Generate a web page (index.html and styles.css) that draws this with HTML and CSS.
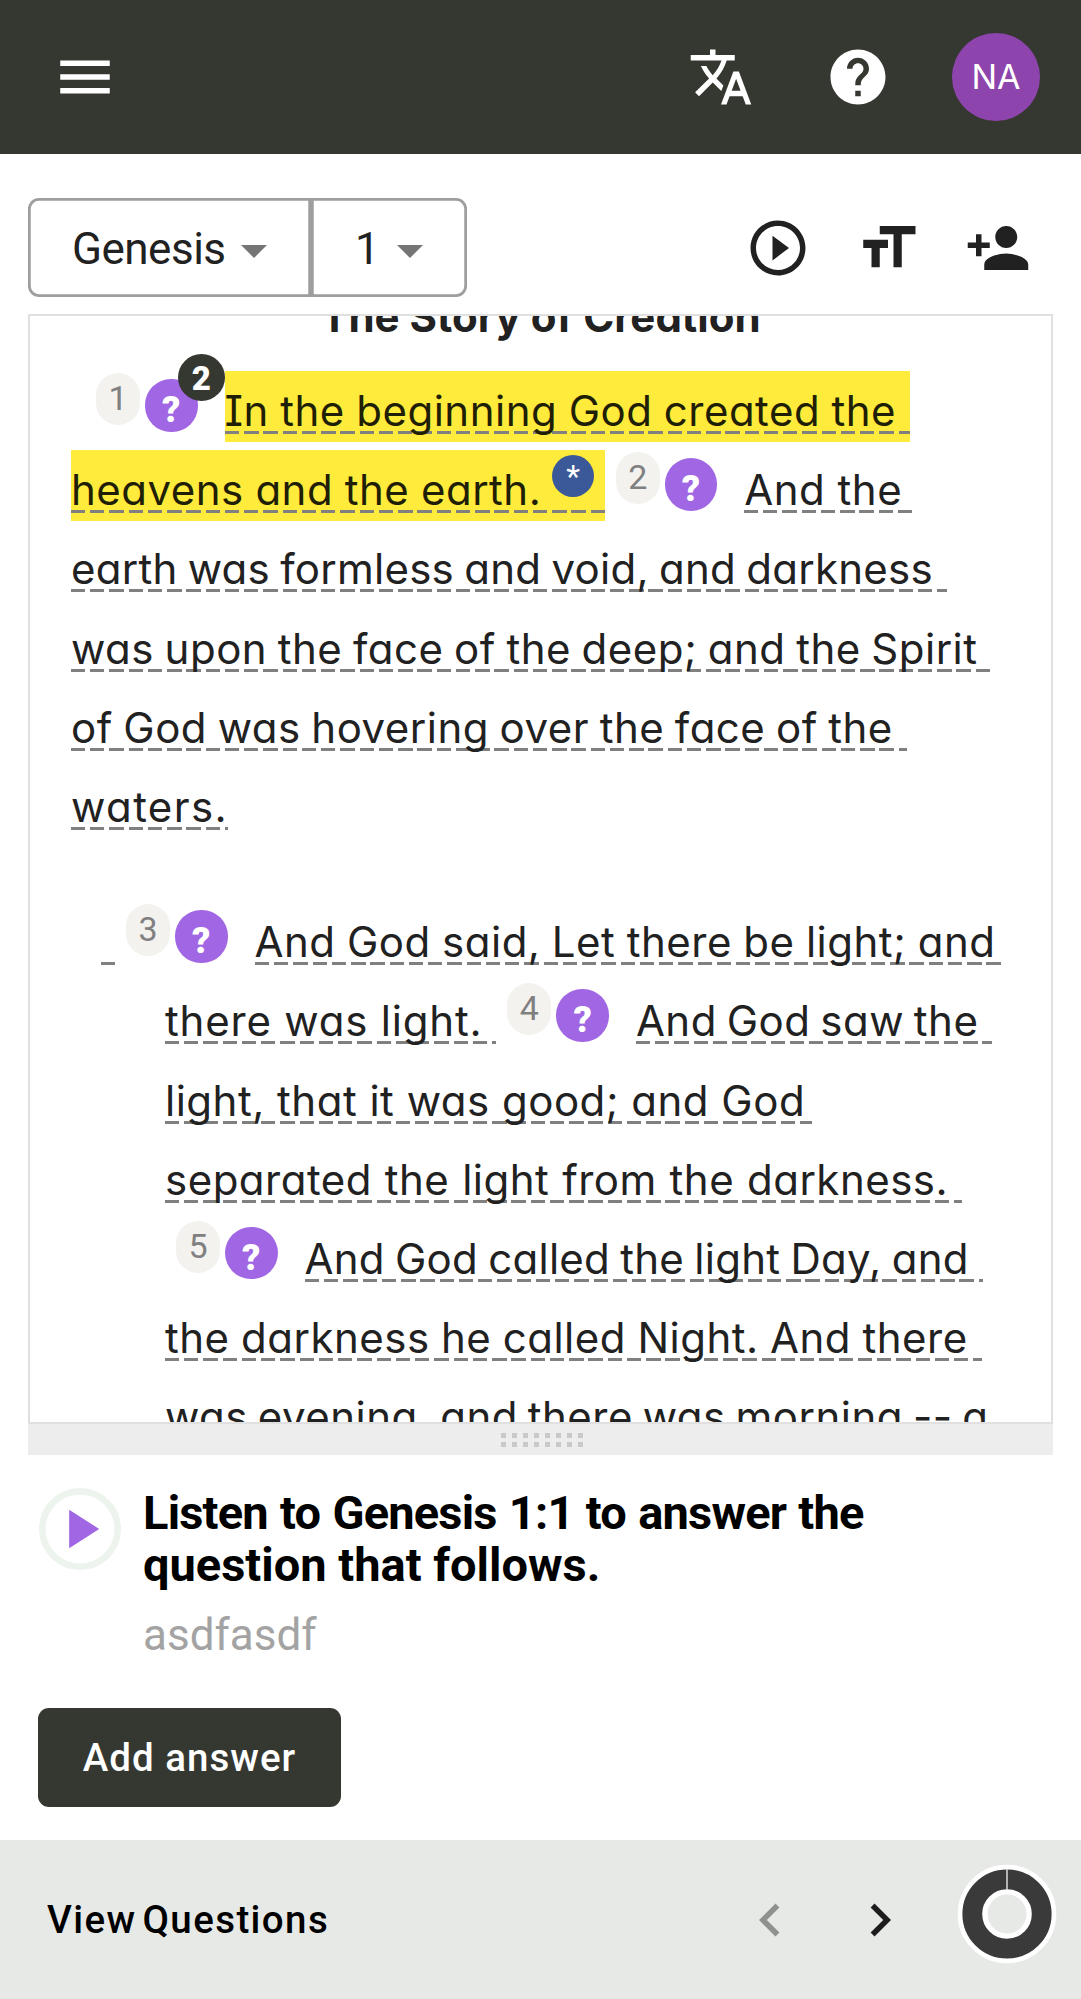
FILE: index.html
```html
<!DOCTYPE html>
<html lang="en">
<head>
<meta charset="utf-8">
<title>Genesis 1</title>
<link rel="stylesheet" href="styles.css">
</head>
<body>
<header class="topbar">
  <svg class="icon" viewBox="0 0 24 24"><path d="M3 18h18v-2H3v2zm0-5h18v-2H3v2zm0-7v2h18V6H3z"/></svg>
  <div class="topbar-actions">
    <svg class="icon" viewBox="0 0 24 24"><path d="M12.87 15.07l-2.54-2.51.03-.03c1.74-1.94 2.98-4.17 3.71-6.53H17V4h-7V2H8v2H1v1.99h11.17C11.5 7.92 10.44 9.75 9 11.35 8.07 10.32 7.3 9.19 6.69 8h-2c.73 1.63 1.73 3.17 2.98 4.56l-5.09 5.02L4 19l5-5 3.11 3.11.76-2.04zM18.5 10h-2L12 22h2l1.12-3h4.75L21 22h2l-4.5-12zm-2.62 7l1.62-4.33L19.12 17h-3.24z"/></svg>
    <svg class="icon help" viewBox="0 0 24 24"><path d="M12 2C6.48 2 2 6.48 2 12s4.48 10 10 10 10-4.48 10-10S17.52 2 12 2zm1 17h-2v-2h2v2zm2.070-7.750l-.9.920C13.450 12.900 13 13.500 13 15h-2v-.5c0-1.100.450-2.100 1.170-2.830l1.240-1.260c.37-.36.590-.86.590-1.410 0-1.100-.9-2-2-2s-2 .9-2 2H8c0-2.210 1.790-4 4-4s4 1.790 4 4c0 .880-.36 1.680-.93 2.250z"/></svg>
    <span class="avatar">NA</span>
  </div>
</header>

<main>
  <div class="toolbar">
    <div class="select book"><span>Genesis</span><i class="arrow"></i></div>
    <div class="select chapter"><span>1</span><i class="arrow"></i></div>
    <div class="tools">
      <svg class="icon" viewBox="0 0 24 24"><path d="M10 16.500l6-4.500-6-4.500v9zM12 2C6.480 2 2 6.480 2 12s4.480 10 10 10 10-4.480 10-10S17.520 2 12 2zm0 18c-4.410 0-8-3.590-8-8s3.590-8 8-8 8 3.590 8 8-3.590 8-8 8z"/></svg>
      <svg class="icon" viewBox="0 0 24 24"><path d="M9 4v3h5v12h3V7h5V4H9zm-6 8h3v7h3v-7h3V9H3v3z"/></svg>
      <svg class="icon" viewBox="0 0 24 24"><path d="M15 12c2.210 0 4-1.790 4-4s-1.790-4-4-4-4 1.790-4 4 1.790 4 4 4zm-9-2V7H4v3H1v2h3v3h2v-3h3v-2H6zm9 4c-2.670 0-8 1.340-8 4v2h16v-2c0-2.660-5.330-4-8-4z"/></svg>
    </div>
  </div>

  <section class="scripture">
    <h2>The Story of Creation</h2>
    <div class="para">
      <div class="line first"><span class="num">1</span><span class="q">?<b class="count">2</b></span><span class="run hl snug">In the beginning God created the</span></div>
      <div class="line"><span class="run hl note-run">heavens and the earth.<sup class="note">*</sup></span><span class="num">2</span><span class="q">?</span><span class="run">And the</span></div>
      <div class="line"><span class="run condensed">earth was formless and void, and darkness</span></div>
      <div class="line"><span class="run tight">was upon the face of the deep; and the Spirit</span></div>
      <div class="line"><span class="run tight">of God was hovering over the face of the</span></div>
      <div class="line"><span class="run end">waters.</span></div>
    </div>
    <div class="para poetry">
      <div class="line hang"><span class="run blank"></span><span class="num">3</span><span class="q">?</span><span class="run snug clipped">And God said, Let there be light; and</span></div>
      <div class="line"><span class="run loose">there was light.</span><span class="num">4</span><span class="q">?</span><span class="run tighter">And God saw the</span></div>
      <div class="line"><span class="run clipped">light, that it was good; and God</span></div>
      <div class="line"><span class="run wide">separated the light from the darkness.</span></div>
      <div class="line"><span class="num">5</span><span class="q">?</span><span class="run condensed">And God called the light Day, and</span></div>
      <div class="line"><span class="run snug">the darkness he called Night. And there</span></div>
      <div class="line"><span class="run tighter">was evening, and there was morning -- a</span></div>
    </div>
  </section>
  <div class="grip"><i></i><i></i></div>

  <section class="question">
    <div class="prompt">
      <svg class="play" viewBox="0 0 82 82"><circle cx="41" cy="41" r="37.700"/><path d="M30.200 21.700v38.500L60.200 41z"/></svg>
      <div>
        <h1><span class="lead">Listen to Genesis 1:1 to answer the</span><br>question that follows.</h1>
        <p>asdfasdf</p>
      </div>
    </div>
    <button class="add">Add answer</button>
  </section>
</main>

<footer>
  <span class="view">View Questions</span>
  <div class="pager">
    <svg class="icon disabled" viewBox="0 0 24 24"><path d="M15.410 7.410L14 6l-6 6 6 6 1.410-1.410L10.830 12z"/></svg>
    <svg class="icon" viewBox="0 0 24 24"><path d="M10 6L8.590 7.410 13.170 12l-4.580 4.590L10 18l6-6z"/></svg>
  </div>
  <svg class="donut" viewBox="0 0 100 100"><circle class="halo" cx="50" cy="50" r="34.400"/><circle class="ring" cx="50" cy="50" r="34.700"/><path d="M50 5v21"/></svg>
</footer>
</body>
</html>
```
FILE: styles.css
```css
* { box-sizing: border-box; }
body {
  margin: 0;
  height: 1999px;
  display: flex;
  flex-direction: column;
  overflow: hidden;
  background: #fff;
  color: #212121;
  font: 44px/1 Roboto, sans-serif;
}
.icon { width: 66px; height: 66px; fill: currentColor; flex: none; }

.topbar {
  height: 154px;
  padding: 0 41px 0 52px;
  display: flex;
  align-items: center;
  justify-content: space-between;
  background: #353831;
  color: #fff;
}
.topbar-actions { display: flex; align-items: center; }
.help { margin: 0 61px 0 71px; }
.avatar {
  width: 88px; height: 88px;
  border-radius: 50%;
  background: #8e44ad;
  font: 34px/88px Inter, sans-serif;
  text-align: center;
}

main { flex: 1; display: flex; flex-direction: column; }
.toolbar { height: 160px; padding: 44px 50px 17px 28px; display: flex; }
.select {
  display: flex;
  align-items: center;
  justify-content: space-between;
  box-shadow: inset 0 0 0 2.750px #9e9e9e;
  padding-top: 2px;
}
.book { width: 283px; padding-left: 44px; padding-right: 44.500px; border-radius: 11px 0 0 11px; letter-spacing: -0.500px; }
.chapter { width: 156px; padding-left: 44px; padding-right: 44.500px; border-radius: 0 11px 11px 0; }
.arrow {
  margin-top: 5px;
  border: 13.500px solid transparent;
  border-top-color: #757575;
  border-bottom: 0;
}
.tools { display: flex; gap: 44px; margin-left: auto; padding-top: 17px; }

.scripture {
  width: 1025px;
  height: 1110px;
  margin-left: 28px;
  border: 2px solid #e0e0e0;
  overflow: hidden;
  font-family: Inter, "Noto Sans", sans-serif;
  font-size: 42px;
  font-feature-settings: "cv11", "cv08";
  letter-spacing: 0.500px;
}
.scripture h2 {
  margin: -39px 0 23px;
  font-size: 42px;
  line-height: 79px;
  height: 71px;
  text-align: center;
  font-weight: 700;
  letter-spacing: 0;
}
.para { padding-left: 41px; }
.line { height: 79.200px; display: flex; }
.first { padding-left: 14px; }
.poetry { margin-top: 56px; padding-left: 135px; }
.hang { margin-left: -64px; }
.run {
  height: 71px;
  line-height: 80px;
  padding-right: 14px;
  white-space: pre;
  background: repeating-linear-gradient(90deg, #808080 0 14.250px, transparent 14.250px 19.250px) 0 60px / 100% 3px no-repeat;
}
.hl { background-color: #ffeb3b; color: #1f1f05; }
.end { padding-right: 0; letter-spacing: 1.400px; }
.blank { width: 14px; padding: 0; }
.snug { word-spacing: -0.900px; }
.tight { word-spacing: -1.700px; }
.tighter { word-spacing: -2.500px; }
.condensed { letter-spacing: 0.250px; word-spacing: -1.800px; }
.loose { letter-spacing: 0.800px; }
.wide { word-spacing: 0.500px; }
.clipped { padding-right: 7px; }
.num, .q, .note, .count {
  flex: none;
  border-radius: 26px;
  text-align: center;
  font-family: Roboto, sans-serif;
  letter-spacing: 0;
}
.num {
  width: 44px; height: 52px;
  margin: 2px 5px 0 11px;
  background: #f3f2ef;
  color: #808080;
  font-size: 34px;
  line-height: 50px;
}
.q {
  position: relative;
  width: 52.500px; height: 52.500px;
  margin: 8px 27px 0 0;
  background: #a066e3;
  color: #fff;
  font-size: 36px;
  font-weight: 900;
  line-height: 63px;
}
.count {
  position: absolute;
  left: 33px; top: -25px;
  width: 46.500px; height: 46.500px;
  background: #353831;
  font-size: 33px;
  line-height: 49px;
}
.note-run { display: flex; padding-right: 11px; word-spacing: -0.700px; }
.note {
  width: 41.500px; height: 41.500px;
  margin: 5px 0 0 11px;
  background: #3b5998;
  color: #fff;
  font-size: 32px;
  line-height: 42px;
}

.grip {
  width: 1025px;
  height: 31px;
  margin-left: 28px;
  background: #ededed;
  display: flex;
  flex-direction: column;
  align-items: center;
  gap: 4px;
  padding: 9px 0 0 3px;
}
.grip i {
  width: 83px;
  height: 5px;
  background: repeating-linear-gradient(90deg, #c9c9c9 0 5.500px, transparent 5.500px 11px);
}

.question { padding: 33px 38px 0; }
.prompt { display: flex; gap: 22px; }
.play { width: 82px; height: 82px; margin-left: 1px; flex: none; }
.play circle { fill: none; stroke: #edf3ed; stroke-width: 6.600; }
.play path { fill: #a066e3; }
.question h1 {
  margin: -1px 0 0;
  color: #000;
  font-size: 47px;
  line-height: 52px;
  font-weight: 700;
}
.lead { letter-spacing: -0.800px; word-spacing: 1.300px; }
.question p { margin: 14px 0 0; line-height: 60px; color: #a3a3a3; }
.add {
  display: block;
  width: 303px; height: 99px;
  margin-top: 43px;
  padding: 0;
  border: 0;
  border-radius: 11px;
  background: #353831;
  color: #fff;
  font: 500 38.500px/97px Roboto, sans-serif;
  letter-spacing: 1px;
}

footer {
  height: 159px;
  flex: none;
  padding: 0 24px 0 47px;
  display: flex;
  align-items: center;
  background: #e7e9e6;
  color: #1d1d1d;
}
.view { padding-top: 2px; color: #000; font-size: 38.500px; font-weight: 500; letter-spacing: 1.400px; word-spacing: -5px; }
.pager { display: flex; gap: 44px; margin-left: auto; }
.disabled { color: #8f918e; }
.donut { width: 100px; height: 100px; margin: -11px 0 0 44px; fill: none; }
.halo { stroke: #fff; stroke-width: 29.800; }
.ring { stroke: #3a3a3a; stroke-width: 19.800; }
.donut path { stroke: #ddd; stroke-width: 1.500; }
```
